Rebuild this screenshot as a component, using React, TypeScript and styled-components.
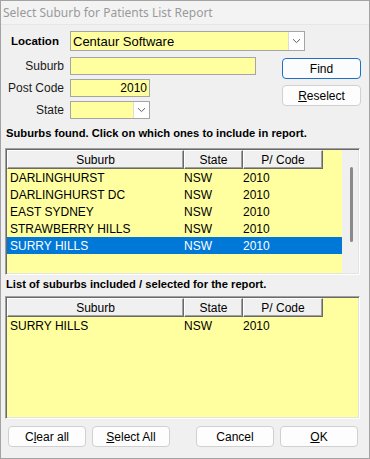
import styled, { createGlobalStyle } from "styled-components";

type Suburb = { name: string; state: string; code: string };

const found: Suburb[] = [
  { name: "DARLINGHURST", state: "NSW", code: "2010" },
  { name: "DARLINGHURST DC", state: "NSW", code: "2010" },
  { name: "EAST SYDNEY", state: "NSW", code: "2010" },
  { name: "STRAWBERRY HILLS", state: "NSW", code: "2010" },
  { name: "SURRY HILLS", state: "NSW", code: "2010" },
];

const selected: Suburb[] = [{ name: "SURRY HILLS", state: "NSW", code: "2010" }];

const Chevron = () => (
  <svg width="9" height="6" viewBox="0 0 9 6">
    <path d="M1 1.2 L4.5 4.6 L8 1.2" fill="none" stroke="#606060" strokeWidth="1" />
  </svg>
);

const SuburbList = ({
  rows,
  activeRow,
  height,
  scroll,
}: {
  rows: Suburb[];
  activeRow?: number;
  height: number;
  scroll?: boolean;
}) => (
  <ListFrame $height={height}>
    <ListArea>
      <HeaderRow>
        <HeaderCell>Suburb</HeaderCell>
        <HeaderCell>State</HeaderCell>
        <HeaderCell>P/ Code</HeaderCell>
      </HeaderRow>
      {rows.map((r, i) => (
        <DataRow key={r.name} $active={i === activeRow}>
          <DataCell>{r.name}</DataCell>
          <DataCell>{r.state}</DataCell>
          <DataCell>{r.code}</DataCell>
        </DataRow>
      ))}
    </ListArea>
    {scroll && (
      <ScrollTrack>
        <Thumb />
      </ScrollTrack>
    )}
  </ListFrame>
);

const App = () => {
  return (
    <>
      <GlobalStyle />
      <Window>
        <TitleBar>Select Suburb for Patients List Report</TitleBar>
        <Body>
          <FormRow>
            <Label $bold>Location</Label>
            <Combo $width={235}>
              <ComboText>Centaur Software</ComboText>
              <DropButton>
                <Chevron />
              </DropButton>
            </Combo>
          </FormRow>

          <SearchArea>
            <Fields>
              <FormRow>
                <Label>Suburb</Label>
                <TextBox $width={186} />
              </FormRow>
              <FormRow>
                <Label>Post Code</Label>
                <TextBox $width={80} $right>
                  2010
                </TextBox>
              </FormRow>
              <FormRow>
                <Label>State</Label>
                <Combo $width={80} $small>
                  <ComboText />
                  <DropButton>
                    <Chevron />
                  </DropButton>
                </Combo>
              </FormRow>
            </Fields>
            <SideButtons>
              <Button $default>Find</Button>
              <Button>
                <Key>R</Key>eselect
              </Button>
            </SideButtons>
          </SearchArea>

          <Caption $top={7} $bottom={8}>
            Suburbs found. Click on which ones to include in report.
          </Caption>
          <SuburbList rows={found} activeRow={4} height={127} scroll />

          <Caption $top={2} $bottom={5}>
            List of suburbs included / selected for the report.
          </Caption>
          <SuburbList rows={selected} height={123} />

          <ButtonBar>
            <Button>
              C<Key>l</Key>ear all
            </Button>
            <Button>
              <Key>S</Key>elect All
            </Button>
            <Spacer />
            <Button>Cancel</Button>
            <Button>
              <Key>O</Key>K
            </Button>
          </ButtonBar>
        </Body>
      </Window>
    </>
  );
};

const GlobalStyle = createGlobalStyle`
  html, body {
    margin: 0;
    padding: 0;
    background: #ffffff;
  }
  * {
    box-sizing: border-box;
  }
`;

const Window = styled.div`
  width: 370px;
  height: 459px;
  display: flex;
  flex-direction: column;
  background: #f0f0f0;
  border: 1px solid #a3a3a3;
  font-family: "Liberation Sans", Arial, sans-serif;
  font-size: 12px;
  color: #000;
`;

const TitleBar = styled.div`
  height: 24px;
  flex: none;
  display: flex;
  align-items: center;
  padding-left: 2px;
  background: #f3f3f3;
  border-bottom: 1px solid #e6e6e6;
  font-family: "Noto Sans", "Open Sans", sans-serif;
  font-size: 12px;
  color: #9a9a9a;
`;

const Body = styled.div`
  flex: 1;
  display: flex;
  flex-direction: column;
  padding: 6px 8px 0 4px;
`;

const FormRow = styled.div`
  display: flex;
  align-items: center;
  gap: 6px;
`;

const Label = styled.div<{ $bold?: boolean }>`
  width: 59px;
  flex: none;
  text-align: ${(p) => (p.$bold ? "left" : "right")};
  padding-left: ${(p) => (p.$bold ? "6px" : "0")};
  font-weight: ${(p) => (p.$bold ? "bold" : "normal")};
  font-size: ${(p) => (p.$bold ? "11.5px" : "12px")};
  color: ${(p) => (p.$bold ? "#000" : "#1a1a1a")};
`;

const TextBox = styled.div<{ $width: number; $right?: boolean }>`
  width: ${(p) => p.$width}px;
  height: 18px;
  background: #ffffa0;
  border: 1px solid #a5a5a5;
  display: flex;
  align-items: center;
  justify-content: ${(p) => (p.$right ? "flex-end" : "flex-start")};
  padding: 0 2px;
  font-size: 12px;
`;

const Combo = styled.div<{ $width: number; $small?: boolean }>`
  width: ${(p) => p.$width}px;
  height: ${(p) => (p.$small ? 18 : 20)}px;
  display: flex;
  background: #ffffa0;
  border: 1px solid #a5a5a5;
`;

const ComboText = styled.div`
  flex: 1;
  display: flex;
  align-items: center;
  padding-left: 2px;
  font-size: 13px;
`;

const DropButton = styled.div`
  width: 16px;
  flex: none;
  display: flex;
  align-items: center;
  justify-content: center;
  background: #ffffff;
  border-left: 1px solid #dcdcdc;
`;

const SearchArea = styled.div`
  display: flex;
  margin-top: 6px;
`;

const Fields = styled.div`
  display: flex;
  flex-direction: column;
  gap: 4px;
`;

const SideButtons = styled.div`
  margin-left: auto;
  margin-top: 1px;
  display: flex;
  flex-direction: column;
  gap: 6px;
`;

const Button = styled.div<{ $default?: boolean }>`
  width: 79px;
  height: 21px;
  display: flex;
  align-items: center;
  justify-content: center;
  border-radius: 4px;
  background: ${(p) => (p.$default ? "#fbfcfe" : "#fdfdfd")};
  border: 1px solid ${(p) => (p.$default ? "#1f6fc5" : "#d0d0d0")};
  font-size: 12px;
  color: #000;
`;

const Key = styled.span`
  text-decoration: underline;
`;

const Caption = styled.div<{ $top: number; $bottom: number }>`
  margin: ${(p) => p.$top}px 0 ${(p) => p.$bottom}px 1px;
  height: 14px;
  line-height: 14px;
  font-size: 11.2px;
  font-weight: bold;
`;

const ListFrame = styled.div<{ $height: number }>`
  width: 355px;
  height: ${(p) => p.$height}px;
  flex: none;
  display: flex;
  border-style: solid;
  border-width: 1px;
  border-color: #a0a0a0 #ffffff #ffffff #a0a0a0;
  box-shadow: inset 1px 1px 0 #696969, inset -1px -1px 0 #e3e3e3;
  padding: 1px;
`;

const ListArea = styled.div`
  flex: 1;
  background: #ffffa0;
`;

const HeaderRow = styled.div`
  display: grid;
  grid-template-columns: 177px 59px 80px;
  height: 19px;
`;

const HeaderCell = styled.div`
  display: flex;
  align-items: center;
  justify-content: center;
  background: #f0f0f0;
  border-top: 1px solid #ffffff;
  border-left: 1px solid #ffffff;
  border-right: 1px solid #696969;
  border-bottom: 1px solid #696969;
  box-shadow: inset -1px -1px 0 #a0a0a0;
  font-size: 12px;
`;

const DataRow = styled.div<{ $active?: boolean }>`
  display: grid;
  grid-template-columns: 174px 59px 1fr;
  height: 17px;
  align-items: center;
  background: ${(p) => (p.$active ? "#0078d7" : "transparent")};
  color: ${(p) => (p.$active ? "#ffffff" : "#000000")};
`;

const DataCell = styled.div`
  padding-left: 3px;
  font-size: 12px;
  white-space: nowrap;
`;

const ScrollTrack = styled.div`
  width: 16px;
  flex: none;
  display: flex;
  justify-content: center;
  padding-top: 17px;
  background: #f0f0f0;
`;

const Thumb = styled.div`
  width: 3px;
  height: 75px;
  margin-left: 2px;
  border-radius: 2px;
  background: #8a8a8a;
`;

const ButtonBar = styled.div`
  display: flex;
  gap: 6px;
  margin: 7px 0 0 3px;

  & > div {
    width: 78px;
  }
`;

const Spacer = styled.span`
  width: 14px;
`;

export default App;
